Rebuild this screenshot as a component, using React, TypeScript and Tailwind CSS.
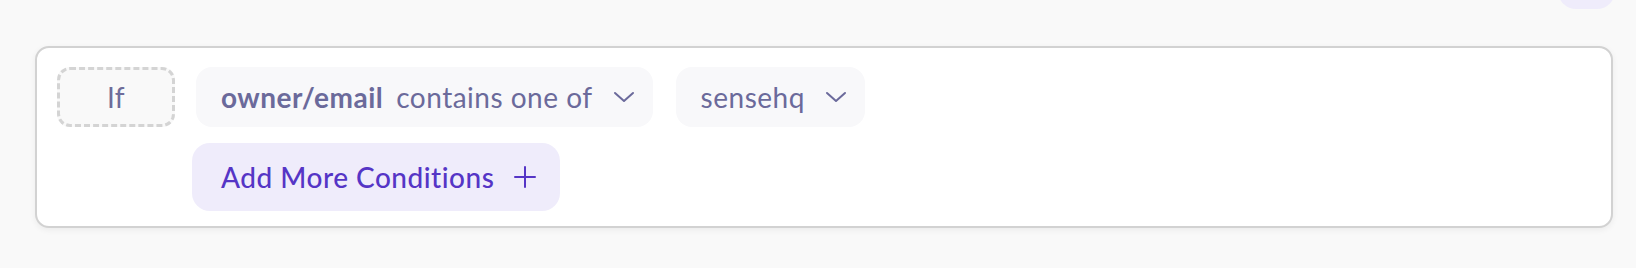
import { ReactNode } from 'react'

const font = { fontFamily: 'Lato, "Noto Sans", sans-serif' }

export default function App() {
  return (
    <div className="min-h-[268px] bg-[#f9f9f9] pl-[35px] pr-[23px]" style={font}>
      <div className="flex h-[46px] justify-end overflow-hidden">
        <div className="-mr-[2px] -mt-[51px] h-[60px] w-[57px] rounded-[18px] bg-[#efecfb]" />
      </div>
      <div className="rounded-[14px] border-2 border-[#d2d2d2] bg-white pb-[15px] pl-[20px] pr-[20px] pt-[19px] shadow-[0_2px_6px_rgba(0,0,0,0.06)]">
        <div className="flex items-start gap-[21px]">
          <div className="flex h-[60px] w-[118px] items-center justify-center rounded-[13px] border-[3px] border-dashed border-[#d4d4d4] bg-[#f9f9f9] text-[28px] tracking-[0.5px] text-[#6e6c9a]">
            If
          </div>
          <div className="flex flex-col items-start gap-[16px]">
            <div className="flex gap-[23px]">
              <Pill>
                <span className="font-bold">owner/email</span>
                <span className="ml-[13px]">contains one of</span>
              </Pill>
              <Pill>sensehq</Pill>
            </div>
            <button
              type="button"
              className="-ml-[4px] flex h-[68px] items-center rounded-[18px] bg-[#efecfb] pl-[29px] pr-[24px] text-[28px] font-medium tracking-[0.5px] text-[#5535c6]"
            >
              Add More Conditions
              <PlusIcon />
            </button>
          </div>
        </div>
      </div>
    </div>
  )
}

function Pill({ children }: { children: ReactNode }) {
  return (
    <div className="flex h-[60px] items-center rounded-[16px] bg-[#f8f8fa] pl-[25px] pr-[18px] text-[28px] tracking-[0.5px] text-[#6b6a9b]">
      <div className="flex items-center whitespace-nowrap">{children}</div>
      <ChevronIcon />
    </div>
  )
}

function ChevronIcon() {
  return (
    <svg
      width="22"
      height="12"
      viewBox="0 0 22 12"
      fill="none"
      stroke="currentColor"
      strokeWidth="2"
      strokeLinecap="round"
      strokeLinejoin="round"
      className="ml-[20px]"
      aria-hidden="true"
    >
      <polyline points="2 2 11 10 20 2" />
    </svg>
  )
}

function PlusIcon() {
  return (
    <svg
      width="22"
      height="22"
      viewBox="0 0 22 22"
      fill="none"
      stroke="currentColor"
      strokeWidth="2"
      strokeLinecap="round"
      className="ml-[20px]"
      aria-hidden="true"
    >
      <path d="M11 1v20M1 11h20" />
    </svg>
  )
}
